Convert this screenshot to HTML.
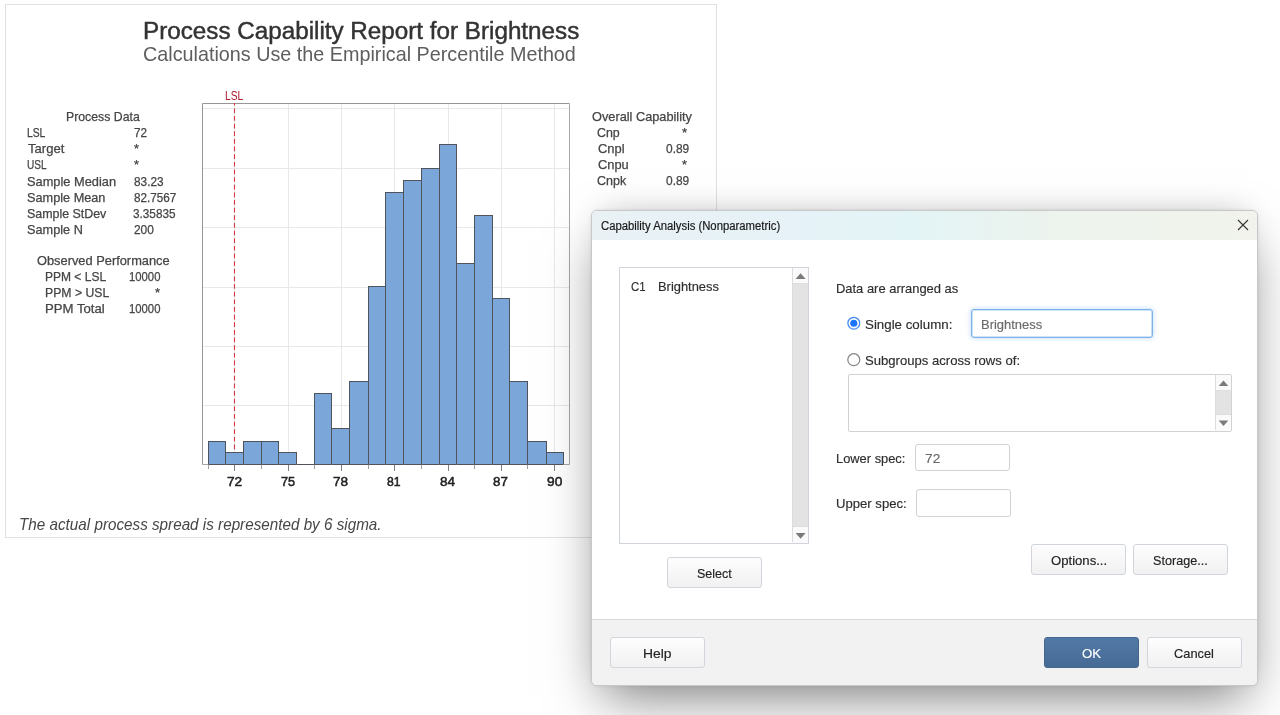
<!DOCTYPE html>
<html><head><meta charset="utf-8"><title>Process Capability Report</title>
<style>
html,body{margin:0;padding:0;width:1280px;height:715px;overflow:hidden;background:#fff;font-family:"Liberation Sans",sans-serif;}
div{white-space:pre;}
</style></head><body>
<div style="position:absolute;left:5px;top:4px;width:710px;height:532px;border:1px solid #e1e1e1;background:#fff"></div>
<svg style="position:absolute;left:0;top:0" width="1280" height="715">
<line x1="203" x2="569" y1="405.5" y2="405.5" stroke="#e8e8e8" stroke-width="1"/>
<line x1="203" x2="569" y1="346.5" y2="346.5" stroke="#e8e8e8" stroke-width="1"/>
<line x1="203" x2="569" y1="287.5" y2="287.5" stroke="#e8e8e8" stroke-width="1"/>
<line x1="203" x2="569" y1="227.5" y2="227.5" stroke="#e8e8e8" stroke-width="1"/>
<line x1="203" x2="569" y1="168.5" y2="168.5" stroke="#e8e8e8" stroke-width="1"/>
<line x1="203" x2="569" y1="108.5" y2="108.5" stroke="#e8e8e8" stroke-width="1"/>
<line x1="234.5" x2="234.5" y1="104" y2="464" stroke="#e8e8e8" stroke-width="1"/>
<line x1="288.5" x2="288.5" y1="104" y2="464" stroke="#e8e8e8" stroke-width="1"/>
<line x1="341.5" x2="341.5" y1="104" y2="464" stroke="#e8e8e8" stroke-width="1"/>
<line x1="394.5" x2="394.5" y1="104" y2="464" stroke="#e8e8e8" stroke-width="1"/>
<line x1="448.5" x2="448.5" y1="104" y2="464" stroke="#e8e8e8" stroke-width="1"/>
<line x1="501.5" x2="501.5" y1="104" y2="464" stroke="#e8e8e8" stroke-width="1"/>
<line x1="554.5" x2="554.5" y1="104" y2="464" stroke="#e8e8e8" stroke-width="1"/>
<rect x="208.5" y="441.5" width="17.0" height="23.0" fill="#7ba6da" stroke="#4f545a" stroke-width="1"/>
<rect x="225.5" y="452.5" width="18.0" height="12.0" fill="#7ba6da" stroke="#4f545a" stroke-width="1"/>
<rect x="243.5" y="441.5" width="18.0" height="23.0" fill="#7ba6da" stroke="#4f545a" stroke-width="1"/>
<rect x="261.5" y="441.5" width="17.0" height="23.0" fill="#7ba6da" stroke="#4f545a" stroke-width="1"/>
<rect x="278.5" y="452.5" width="18.0" height="12.0" fill="#7ba6da" stroke="#4f545a" stroke-width="1"/>
<rect x="296.5" y="464.5" width="18.0" height="0.0" fill="#7ba6da" stroke="#4f545a" stroke-width="1"/>
<rect x="314.5" y="393.5" width="17.0" height="71.0" fill="#7ba6da" stroke="#4f545a" stroke-width="1"/>
<rect x="331.5" y="428.5" width="18.0" height="36.0" fill="#7ba6da" stroke="#4f545a" stroke-width="1"/>
<rect x="349.5" y="381.5" width="19.0" height="83.0" fill="#7ba6da" stroke="#4f545a" stroke-width="1"/>
<rect x="368.5" y="286.5" width="17.0" height="178.0" fill="#7ba6da" stroke="#4f545a" stroke-width="1"/>
<rect x="385.5" y="192.5" width="18.0" height="272.0" fill="#7ba6da" stroke="#4f545a" stroke-width="1"/>
<rect x="403.5" y="180.5" width="18.0" height="284.0" fill="#7ba6da" stroke="#4f545a" stroke-width="1"/>
<rect x="421.5" y="168.5" width="18.0" height="296.0" fill="#7ba6da" stroke="#4f545a" stroke-width="1"/>
<rect x="439.5" y="144.5" width="17.0" height="320.0" fill="#7ba6da" stroke="#4f545a" stroke-width="1"/>
<rect x="456.5" y="263.5" width="18.0" height="201.0" fill="#7ba6da" stroke="#4f545a" stroke-width="1"/>
<rect x="474.5" y="215.5" width="18.0" height="249.0" fill="#7ba6da" stroke="#4f545a" stroke-width="1"/>
<rect x="492.5" y="298.5" width="17.0" height="166.0" fill="#7ba6da" stroke="#4f545a" stroke-width="1"/>
<rect x="509.5" y="381.5" width="18.0" height="83.0" fill="#7ba6da" stroke="#4f545a" stroke-width="1"/>
<rect x="527.5" y="441.5" width="19.0" height="23.0" fill="#7ba6da" stroke="#4f545a" stroke-width="1"/>
<rect x="546.5" y="452.5" width="17.0" height="12.0" fill="#7ba6da" stroke="#4f545a" stroke-width="1"/>
<path d="M202.5 464.5 V103.5 H569.5" fill="none" stroke="#969696" stroke-width="1"/><path d="M569.5 103.5 V464.5 H202.5" fill="none" stroke="#a6a6a6" stroke-width="1"/>
<line x1="208.5" x2="225.5" y1="464.5" y2="464.5" stroke="#4f545a" stroke-width="1"/>
<line x1="225.5" x2="243.5" y1="464.5" y2="464.5" stroke="#4f545a" stroke-width="1"/>
<line x1="243.5" x2="261.5" y1="464.5" y2="464.5" stroke="#4f545a" stroke-width="1"/>
<line x1="261.5" x2="278.5" y1="464.5" y2="464.5" stroke="#4f545a" stroke-width="1"/>
<line x1="278.5" x2="296.5" y1="464.5" y2="464.5" stroke="#4f545a" stroke-width="1"/>
<line x1="296.5" x2="314.5" y1="464.5" y2="464.5" stroke="#4f545a" stroke-width="1"/>
<line x1="314.5" x2="331.5" y1="464.5" y2="464.5" stroke="#4f545a" stroke-width="1"/>
<line x1="331.5" x2="349.5" y1="464.5" y2="464.5" stroke="#4f545a" stroke-width="1"/>
<line x1="349.5" x2="368.5" y1="464.5" y2="464.5" stroke="#4f545a" stroke-width="1"/>
<line x1="368.5" x2="385.5" y1="464.5" y2="464.5" stroke="#4f545a" stroke-width="1"/>
<line x1="385.5" x2="403.5" y1="464.5" y2="464.5" stroke="#4f545a" stroke-width="1"/>
<line x1="403.5" x2="421.5" y1="464.5" y2="464.5" stroke="#4f545a" stroke-width="1"/>
<line x1="421.5" x2="439.5" y1="464.5" y2="464.5" stroke="#4f545a" stroke-width="1"/>
<line x1="439.5" x2="456.5" y1="464.5" y2="464.5" stroke="#4f545a" stroke-width="1"/>
<line x1="456.5" x2="474.5" y1="464.5" y2="464.5" stroke="#4f545a" stroke-width="1"/>
<line x1="474.5" x2="492.5" y1="464.5" y2="464.5" stroke="#4f545a" stroke-width="1"/>
<line x1="492.5" x2="509.5" y1="464.5" y2="464.5" stroke="#4f545a" stroke-width="1"/>
<line x1="509.5" x2="527.5" y1="464.5" y2="464.5" stroke="#4f545a" stroke-width="1"/>
<line x1="527.5" x2="546.5" y1="464.5" y2="464.5" stroke="#4f545a" stroke-width="1"/>
<line x1="546.5" x2="563.5" y1="464.5" y2="464.5" stroke="#4f545a" stroke-width="1"/>
<line x1="234.5" x2="234.5" y1="465" y2="471" stroke="#808080" stroke-width="1"/>
<line x1="288.5" x2="288.5" y1="465" y2="471" stroke="#808080" stroke-width="1"/>
<line x1="341.5" x2="341.5" y1="465" y2="471" stroke="#808080" stroke-width="1"/>
<line x1="394.5" x2="394.5" y1="465" y2="471" stroke="#808080" stroke-width="1"/>
<line x1="448.5" x2="448.5" y1="465" y2="471" stroke="#808080" stroke-width="1"/>
<line x1="501.5" x2="501.5" y1="465" y2="471" stroke="#808080" stroke-width="1"/>
<line x1="554.5" x2="554.5" y1="465" y2="471" stroke="#808080" stroke-width="1"/>
<line x1="208.5" x2="208.5" y1="465" y2="469" stroke="#a0a0a0" stroke-width="1"/>
<line x1="261.5" x2="261.5" y1="465" y2="469" stroke="#a0a0a0" stroke-width="1"/>
<line x1="314.5" x2="314.5" y1="465" y2="469" stroke="#a0a0a0" stroke-width="1"/>
<line x1="368.5" x2="368.5" y1="465" y2="469" stroke="#a0a0a0" stroke-width="1"/>
<line x1="421.5" x2="421.5" y1="465" y2="469" stroke="#a0a0a0" stroke-width="1"/>
<line x1="474.5" x2="474.5" y1="465" y2="469" stroke="#a0a0a0" stroke-width="1"/>
<line x1="527.5" x2="527.5" y1="465" y2="469" stroke="#a0a0a0" stroke-width="1"/>
<line x1="234.5" x2="234.5" y1="103" y2="449.5" stroke="#d93347" stroke-width="1.1" stroke-dasharray="4.7,2.94" stroke-dashoffset="2.24"/>
</svg>
<div style="position:absolute;left:604px;top:210px;width:640px;height:30px;background:rgba(0,0,0,0.12);filter:blur(14px)"></div>
<div style="position:absolute;left:591px;top:210px;width:665px;height:474px;border:1px solid #c8c8c8;border-radius:6px;overflow:hidden;background:#fff;box-shadow:0 21px 50px -11px rgba(0,0,0,0.52), 0 0 3px rgba(0,0,0,0.10)"><div style="position:absolute;left:0;top:0;right:0;height:29px;background:linear-gradient(90deg,#e9f1f5 0%,#e6f2f7 30%,#e3f4f6 48%,#edf3ed 70%,#f1f3ec 100%)"></div><div style="position:absolute;left:0;right:0;top:408px;bottom:0;background:#f2f2f2;border-top:1px solid #d9d9d9"></div></div>
<svg style="position:absolute;left:1236px;top:218px" width="14" height="14"><path d="M2 2 L12 12 M12 2 L2 12" stroke="#333" stroke-width="1.1"/></svg>
<div style="position:absolute;left:619px;top:267px;width:188px;height:275px;border:1px solid #ced4da;background:#fff"></div>
<div style="position:absolute;left:792px;top:268px;width:15px;height:274px;background:#e3e3e3;border-left:1px solid #dcdcdc"></div>
<div style="position:absolute;left:793px;top:268px;width:15px;height:15px;background:#fafafa;border-bottom:1px solid #dedede"></div>
<div style="position:absolute;left:793px;top:526px;width:15px;height:16px;background:#fafafa;border-top:1px solid #dedede"></div>
<svg style="position:absolute;left:793px;top:268px" width="15" height="15"><path d="M2.6 11 L12.6 11 L7.6 5.3 Z" fill="#7a7a7a"/></svg>
<svg style="position:absolute;left:793px;top:527px" width="15" height="15"><path d="M2.6 6 L12.6 6 L7.6 11.7 Z" fill="#7a7a7a"/></svg>
<div style="position:absolute;left:667px;top:557px;width:93px;height:29px;border:1px solid #d0d6dc;border-radius:3px;background:linear-gradient(#fdfdfd,#f1f1f1)"></div>
<svg style="position:absolute;left:845px;top:314px" width="18" height="18"><circle cx="8.8" cy="9.2" r="5.9" fill="#fff" stroke="#4189f4" stroke-width="1.25"/><circle cx="8.8" cy="9.2" r="3.55" fill="#1a73fb"/></svg>
<div style="position:absolute;left:971px;top:309px;width:180px;height:27px;border:1px solid #7db3ea;border-radius:3px;background:#fff;box-shadow:0 0 4px 1px rgba(110,170,235,0.32), inset 0 0 0 0.6px rgba(125,179,234,0.7)"></div>
<svg style="position:absolute;left:845px;top:351px" width="18" height="18"><circle cx="8.8" cy="8.7" r="6" fill="#fff" stroke="#858585" stroke-width="1.2"/></svg>
<div style="position:absolute;left:848px;top:374px;width:382px;height:56px;border:1px solid #d2d2d2;border-radius:2px;background:#fff"></div>
<div style="position:absolute;left:1215px;top:375px;width:15px;height:55px;background:#e3e3e3;border-left:1px solid #dcdcdc"></div>
<div style="position:absolute;left:1216px;top:375px;width:15px;height:15px;background:#fafafa;border-bottom:1px solid #dedede"></div>
<div style="position:absolute;left:1216px;top:414px;width:15px;height:16px;background:#fafafa;border-top:1px solid #dedede"></div>
<svg style="position:absolute;left:1216px;top:375px" width="15" height="15"><path d="M2.7 11 L12.3 11 L7.5 5.6 Z" fill="#7a7a7a"/></svg>
<svg style="position:absolute;left:1216px;top:415px" width="15" height="15"><path d="M2.7 5.6 L12.3 5.6 L7.5 11 Z" fill="#7a7a7a"/></svg>
<div style="position:absolute;left:915px;top:444px;width:93px;height:25px;border:1px solid #d2d2d2;border-radius:3px;background:#fff"></div>
<div style="position:absolute;left:916px;top:489px;width:93px;height:26px;border:1px solid #d2d2d2;border-radius:3px;background:#fff"></div>
<div style="position:absolute;left:1031px;top:544px;width:93px;height:29px;border:1px solid #d0d6dc;border-radius:3px;background:linear-gradient(#fdfdfd,#f1f1f1)"></div>
<div style="position:absolute;left:1133px;top:544px;width:93px;height:29px;border:1px solid #d0d6dc;border-radius:3px;background:linear-gradient(#fdfdfd,#f1f1f1)"></div>
<div style="position:absolute;left:610px;top:637px;width:93px;height:29px;border:1px solid #d0d6dc;border-radius:3px;background:linear-gradient(#fdfdfd,#f1f1f1)"></div>
<div style="position:absolute;left:1044px;top:637px;width:93px;height:29px;border:1px solid #41678f;border-radius:3px;background:linear-gradient(#5279a6,#466a94)"></div>
<div style="position:absolute;left:1147px;top:637px;width:93px;height:29px;border:1px solid #d0d6dc;border-radius:3px;background:linear-gradient(#fdfdfd,#f1f1f1)"></div>
<div style="position:absolute;left:143.45px;top:20.01px;font-size:23.3px;line-height:23.3px;color:#333;transform:scaleX(1.0399);transform-origin:0 0;-webkit-text-stroke:0.45px #333;">Process Capability Report for Brightness</div>
<div style="position:absolute;left:143.42px;top:44.00px;font-size:20.3px;line-height:20.3px;color:#5e5e5e;transform:scaleX(0.9746);transform-origin:0 0;">Calculations Use the Empirical Percentile Method</div>
<div style="position:absolute;left:65.66px;top:111.01px;font-size:12.4px;line-height:12.4px;color:#454545;transform:scaleX(0.9910);transform-origin:0 0;-webkit-text-stroke:0.25px #454545;">Process Data</div>
<div style="position:absolute;left:26.89px;top:127.01px;font-size:12.4px;line-height:12.4px;color:#454545;transform:scaleX(0.8318);transform-origin:0 0;-webkit-text-stroke:0.25px #454545;">LSL</div>
<div style="position:absolute;left:27.70px;top:143.01px;font-size:12.4px;line-height:12.4px;color:#454545;transform:scaleX(1.0550);transform-origin:0 0;-webkit-text-stroke:0.25px #454545;">Target</div>
<div style="position:absolute;left:26.88px;top:159.01px;font-size:12.4px;line-height:12.4px;color:#454545;transform:scaleX(0.8113);transform-origin:0 0;-webkit-text-stroke:0.25px #454545;">USL</div>
<div style="position:absolute;left:26.82px;top:176.01px;font-size:12.4px;line-height:12.4px;color:#454545;transform:scaleX(1.0346);transform-origin:0 0;-webkit-text-stroke:0.25px #454545;">Sample Median</div>
<div style="position:absolute;left:26.85px;top:192.01px;font-size:12.4px;line-height:12.4px;color:#454545;transform:scaleX(1.0259);transform-origin:0 0;-webkit-text-stroke:0.25px #454545;">Sample Mean</div>
<div style="position:absolute;left:26.90px;top:208.01px;font-size:12.4px;line-height:12.4px;color:#454545;transform:scaleX(1.0016);transform-origin:0 0;-webkit-text-stroke:0.25px #454545;">Sample StDev</div>
<div style="position:absolute;left:26.92px;top:224.01px;font-size:12.4px;line-height:12.4px;color:#454545;transform:scaleX(1.0258);transform-origin:0 0;-webkit-text-stroke:0.25px #454545;">Sample N</div>
<div style="position:absolute;left:134.36px;top:127.01px;font-size:12.4px;line-height:12.4px;color:#454545;transform:scaleX(0.9467);transform-origin:0 0;-webkit-text-stroke:0.25px #454545;">72</div>
<div style="position:absolute;left:133.51px;top:143.01px;font-size:12.4px;line-height:12.4px;color:#454545;transform:scaleX(1.0296);transform-origin:0 0;-webkit-text-stroke:0.25px #454545;">*</div>
<div style="position:absolute;left:133.51px;top:159.01px;font-size:12.4px;line-height:12.4px;color:#454545;transform:scaleX(1.0296);transform-origin:0 0;-webkit-text-stroke:0.25px #454545;">*</div>
<div style="position:absolute;left:133.96px;top:176.01px;font-size:12.4px;line-height:12.4px;color:#454545;transform:scaleX(0.9530);transform-origin:0 0;-webkit-text-stroke:0.25px #454545;">83.23</div>
<div style="position:absolute;left:133.91px;top:192.01px;font-size:12.4px;line-height:12.4px;color:#454545;transform:scaleX(0.9442);transform-origin:0 0;-webkit-text-stroke:0.25px #454545;">82.7567</div>
<div style="position:absolute;left:133.38px;top:208.01px;font-size:12.4px;line-height:12.4px;color:#454545;transform:scaleX(0.9500);transform-origin:0 0;-webkit-text-stroke:0.25px #454545;">3.35835</div>
<div style="position:absolute;left:133.96px;top:224.01px;font-size:12.4px;line-height:12.4px;color:#454545;transform:scaleX(0.9605);transform-origin:0 0;-webkit-text-stroke:0.25px #454545;">200</div>
<div style="position:absolute;left:36.57px;top:255.01px;font-size:12.4px;line-height:12.4px;color:#454545;transform:scaleX(1.0356);transform-origin:0 0;-webkit-text-stroke:0.25px #454545;">Observed Performance</div>
<div style="position:absolute;left:45.38px;top:271.01px;font-size:12.4px;line-height:12.4px;color:#454545;transform:scaleX(0.9693);transform-origin:0 0;-webkit-text-stroke:0.25px #454545;">PPM &lt; LSL</div>
<div style="position:absolute;left:44.99px;top:287.01px;font-size:12.4px;line-height:12.4px;color:#454545;transform:scaleX(0.9867);transform-origin:0 0;-webkit-text-stroke:0.25px #454545;">PPM &gt; USL</div>
<div style="position:absolute;left:45.20px;top:303.01px;font-size:12.4px;line-height:12.4px;color:#454545;transform:scaleX(1.0621);transform-origin:0 0;-webkit-text-stroke:0.25px #454545;">PPM Total</div>
<div style="position:absolute;left:128.62px;top:271.01px;font-size:12.4px;line-height:12.4px;color:#454545;transform:scaleX(0.9125);transform-origin:0 0;-webkit-text-stroke:0.25px #454545;">10000</div>
<div style="position:absolute;left:155.34px;top:287.01px;font-size:12.4px;line-height:12.4px;color:#454545;transform:scaleX(1.0418);transform-origin:0 0;-webkit-text-stroke:0.25px #454545;">*</div>
<div style="position:absolute;left:128.62px;top:303.01px;font-size:12.4px;line-height:12.4px;color:#454545;transform:scaleX(0.9125);transform-origin:0 0;-webkit-text-stroke:0.25px #454545;">10000</div>
<div style="position:absolute;left:592.28px;top:111.01px;font-size:12.4px;line-height:12.4px;color:#454545;transform:scaleX(1.0289);transform-origin:0 0;-webkit-text-stroke:0.25px #454545;">Overall Capability</div>
<div style="position:absolute;left:597.30px;top:127.01px;font-size:12.4px;line-height:12.4px;color:#454545;transform:scaleX(0.9997);transform-origin:0 0;-webkit-text-stroke:0.25px #454545;">Cnp</div>
<div style="position:absolute;left:597.81px;top:143.01px;font-size:12.4px;line-height:12.4px;color:#454545;transform:scaleX(1.0400);transform-origin:0 0;-webkit-text-stroke:0.25px #454545;">Cnpl</div>
<div style="position:absolute;left:597.77px;top:159.01px;font-size:12.4px;line-height:12.4px;color:#454545;transform:scaleX(1.0376);transform-origin:0 0;-webkit-text-stroke:0.25px #454545;">Cnpu</div>
<div style="position:absolute;left:597.32px;top:175.01px;font-size:12.4px;line-height:12.4px;color:#454545;transform:scaleX(1.0075);transform-origin:0 0;-webkit-text-stroke:0.25px #454545;">Cnpk</div>
<div style="position:absolute;left:682.45px;top:127.01px;font-size:12.4px;line-height:12.4px;color:#454545;transform:scaleX(1.0625);transform-origin:0 0;-webkit-text-stroke:0.25px #454545;">*</div>
<div style="position:absolute;left:665.60px;top:143.01px;font-size:12.4px;line-height:12.4px;color:#454545;transform:scaleX(0.9633);transform-origin:0 0;-webkit-text-stroke:0.25px #454545;">0.89</div>
<div style="position:absolute;left:682.44px;top:159.01px;font-size:12.4px;line-height:12.4px;color:#454545;transform:scaleX(1.0190);transform-origin:0 0;-webkit-text-stroke:0.25px #454545;">*</div>
<div style="position:absolute;left:665.60px;top:175.01px;font-size:12.4px;line-height:12.4px;color:#454545;transform:scaleX(0.9633);transform-origin:0 0;-webkit-text-stroke:0.25px #454545;">0.89</div>
<div style="position:absolute;left:18.98px;top:517.00px;font-size:15.9px;line-height:15.9px;color:#474747;transform:scaleX(0.9591);transform-origin:0 0;font-style:italic;">The actual process spread is represented by 6 sigma.</div>
<div style="position:absolute;left:227.17px;top:476.01px;font-size:12.8px;line-height:12.8px;color:#222;transform:scaleX(1.0690);transform-origin:0 0;-webkit-text-stroke:0.5px #222;">72</div>
<div style="position:absolute;left:280.50px;top:476.01px;font-size:12.8px;line-height:12.8px;color:#222;transform:scaleX(0.9950);transform-origin:0 0;-webkit-text-stroke:0.5px #222;">75</div>
<div style="position:absolute;left:333.33px;top:476.01px;font-size:12.8px;line-height:12.8px;color:#222;transform:scaleX(1.0582);transform-origin:0 0;-webkit-text-stroke:0.5px #222;">78</div>
<div style="position:absolute;left:386.74px;top:476.01px;font-size:12.8px;line-height:12.8px;color:#222;transform:scaleX(0.9493);transform-origin:0 0;-webkit-text-stroke:0.5px #222;">81</div>
<div style="position:absolute;left:439.61px;top:476.01px;font-size:12.8px;line-height:12.8px;color:#222;transform:scaleX(1.0523);transform-origin:0 0;-webkit-text-stroke:0.5px #222;">84</div>
<div style="position:absolute;left:492.89px;top:476.01px;font-size:12.8px;line-height:12.8px;color:#222;transform:scaleX(1.0414);transform-origin:0 0;-webkit-text-stroke:0.5px #222;">87</div>
<div style="position:absolute;left:546.62px;top:476.01px;font-size:12.8px;line-height:12.8px;color:#222;transform:scaleX(1.0728);transform-origin:0 0;-webkit-text-stroke:0.5px #222;">90</div>
<div style="position:absolute;left:225.20px;top:90.01px;font-size:12.4px;line-height:12.4px;color:#a8192e;transform:scaleX(0.8223);transform-origin:0 0;">LSL</div>
<div style="position:absolute;left:600.75px;top:220.00px;font-size:12px;line-height:12px;color:#1a1a1a;transform:scaleX(0.9425);transform-origin:0 0;-webkit-text-stroke:0.2px #1a1a1a;">Capability Analysis (Nonparametric)</div>
<div style="position:absolute;left:631.32px;top:281.01px;font-size:12.4px;line-height:12.4px;color:#2e2e2e;transform:scaleX(0.9229);transform-origin:0 0;-webkit-text-stroke:0.15px #2e2e2e;">C1</div>
<div style="position:absolute;left:657.64px;top:281.01px;font-size:12.4px;line-height:12.4px;color:#2e2e2e;transform:scaleX(1.0406);transform-origin:0 0;-webkit-text-stroke:0.15px #2e2e2e;">Brightness</div>
<div style="position:absolute;left:696.71px;top:568.01px;font-size:12.4px;line-height:12.4px;color:#222;transform:scaleX(1.0085);transform-origin:0 0;-webkit-text-stroke:0.15px #222;">Select</div>
<div style="position:absolute;left:836.06px;top:283.01px;font-size:12.4px;line-height:12.4px;color:#2e2e2e;transform:scaleX(1.0436);transform-origin:0 0;-webkit-text-stroke:0.15px #2e2e2e;">Data are arranged as</div>
<div style="position:absolute;left:865.24px;top:319.01px;font-size:12.4px;line-height:12.4px;color:#2e2e2e;transform:scaleX(1.0747);transform-origin:0 0;-webkit-text-stroke:0.15px #2e2e2e;">Single column:</div>
<div style="position:absolute;left:981.20px;top:319.01px;font-size:12.4px;line-height:12.4px;color:#6a6a6a;transform:scaleX(1.0460);transform-origin:0 0;-webkit-text-stroke:0.15px #6a6a6a;">Brightness</div>
<div style="position:absolute;left:865.40px;top:355.01px;font-size:12.4px;line-height:12.4px;color:#2e2e2e;transform:scaleX(1.0571);transform-origin:0 0;-webkit-text-stroke:0.15px #2e2e2e;">Subgroups across rows of:</div>
<div style="position:absolute;left:835.86px;top:453.01px;font-size:12.4px;line-height:12.4px;color:#2e2e2e;transform:scaleX(1.0386);transform-origin:0 0;-webkit-text-stroke:0.15px #2e2e2e;">Lower spec:</div>
<div style="position:absolute;left:924.61px;top:453.01px;font-size:12.4px;line-height:12.4px;color:#6a6a6a;transform:scaleX(1.1093);transform-origin:0 0;-webkit-text-stroke:0.15px #6a6a6a;">72</div>
<div style="position:absolute;left:835.93px;top:498.01px;font-size:12.4px;line-height:12.4px;color:#2e2e2e;transform:scaleX(1.0587);transform-origin:0 0;-webkit-text-stroke:0.15px #2e2e2e;">Upper spec:</div>
<div style="position:absolute;left:1050.77px;top:555.01px;font-size:12.4px;line-height:12.4px;color:#222;transform:scaleX(1.0584);transform-origin:0 0;-webkit-text-stroke:0.15px #222;">Options...</div>
<div style="position:absolute;left:1153.41px;top:555.01px;font-size:12.4px;line-height:12.4px;color:#222;transform:scaleX(1.0192);transform-origin:0 0;-webkit-text-stroke:0.15px #222;">Storage...</div>
<div style="position:absolute;left:643.05px;top:648.01px;font-size:12.4px;line-height:12.4px;color:#222;transform:scaleX(1.1195);transform-origin:0 0;-webkit-text-stroke:0.15px #222;">Help</div>
<div style="position:absolute;left:1081.67px;top:648.01px;font-size:12.4px;line-height:12.4px;color:#fff;transform:scaleX(1.0663);transform-origin:0 0;-webkit-text-stroke:0.15px #fff;">OK</div>
<div style="position:absolute;left:1174.37px;top:648.01px;font-size:12.4px;line-height:12.4px;color:#222;transform:scaleX(1.0342);transform-origin:0 0;-webkit-text-stroke:0.15px #222;">Cancel</div>
</body></html>
